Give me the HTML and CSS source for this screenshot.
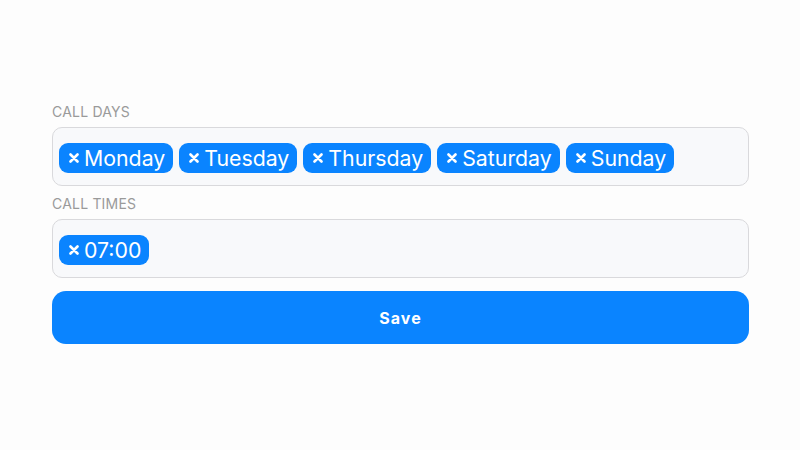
FILE: index.html
```html
<!DOCTYPE html>
<html>
<head>
<meta charset="utf-8">
<link rel="stylesheet" href="styles.css">
</head>
<body>
<div class="form">
  <div class="label">CALL DAYS</div>
  <div class="field">
    <span class="chip"><svg class="x" viewBox="0 0 10 10"><path d="M1.5 1.5L8.5 8.5M8.5 1.5L1.5 8.5"/></svg>Monday</span>
    <span class="chip"><svg class="x" viewBox="0 0 10 10"><path d="M1.5 1.5L8.5 8.5M8.5 1.5L1.5 8.5"/></svg>Tuesday</span>
    <span class="chip"><svg class="x" viewBox="0 0 10 10"><path d="M1.5 1.5L8.5 8.5M8.5 1.5L1.5 8.5"/></svg>Thursday</span>
    <span class="chip"><svg class="x" viewBox="0 0 10 10"><path d="M1.5 1.5L8.5 8.5M8.5 1.5L1.5 8.5"/></svg>Saturday</span>
    <span class="chip"><svg class="x" viewBox="0 0 10 10"><path d="M1.5 1.5L8.5 8.5M8.5 1.5L1.5 8.5"/></svg>Sunday</span>
  </div>
  <div class="label">CALL TIMES</div>
  <div class="field">
    <span class="chip"><svg class="x" viewBox="0 0 10 10"><path d="M1.5 1.5L8.5 8.5M8.5 1.5L1.5 8.5"/></svg>07:00</span>
  </div>
  <button class="save">Save</button>
</div>
</body>
</html>
```
FILE: styles.css
```css
html, body {
  margin: 0;
  padding: 0;
  background: #fdfdfd;
  font-family: Inter, "Noto Sans", sans-serif;
}
.form {
  width: 697px;
  margin-left: 52px;
  padding-top: 103px;
  display: flex;
  flex-direction: column;
}
.label {
  font-size: 14px;
  color: #9a9a9a;
  line-height: 18px;
  height: 18px;
  margin-bottom: 6px;
  letter-spacing: 0.2px;
}
.field {
  box-sizing: border-box;
  height: 59px;
  border: 1px solid #d9d9dc;
  border-radius: 10px;
  background: #f8f9fb;
  padding: 15px 6px 0 6px;
  display: flex;
  gap: 6px;
  align-items: flex-start;
  margin-bottom: 9px;
}
.chip {
  display: inline-flex;
  align-items: center;
  height: 30px;
  padding: 0 8px 0 10px;
  background: #0a84ff;
  color: #fff;
  border-radius: 9px;
  font-size: 21.3px;
  line-height: 30px;
}
.x {
  width: 10px;
  height: 10px;
  margin-right: 5px;
  stroke: #fff;
  stroke-width: 2.6;
  stroke-linecap: round;
  fill: none;
}
.save {
  margin-top: 4px;
  height: 53px;
  border: none;
  border-radius: 14px;
  background: #0a84ff;
  color: #fff;
  font-family: Inter, sans-serif;
  font-weight: 700;
  font-size: 16px;
  letter-spacing: 1px;
}
```
